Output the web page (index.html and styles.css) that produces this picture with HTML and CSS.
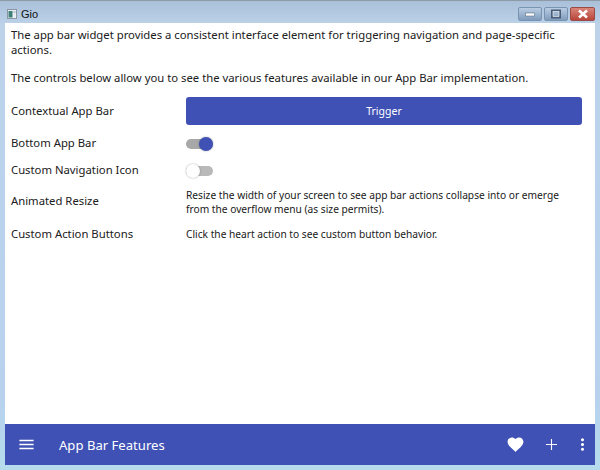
FILE: index.html
```html
<!DOCTYPE html>
<html lang="en">
<head>
    <meta charset="utf-8">
    <link rel="stylesheet" href="styles.css">
    <title>Gio</title>
</head>
<body>
<div class="window">
    <div class="titlebar">
        <svg class="app-icon" width="10" height="10" viewBox="0 0 10 10">
            <rect x="0.5" y="0.5" width="9" height="9" fill="#e8eef2" stroke="#8a97a3"/>
            <rect x="1.5" y="2" width="4" height="6.5" fill="#3f7f78"/>
            <rect x="6.5" y="2" width="2" height="2" fill="#b9c6d0"/>
        </svg>
        <span class="window-title">Gio</span>
        <div class="window-buttons">
            <div class="win-btn">
                <svg width="12" height="8" viewBox="0 0 12 8"><rect x="1.5" y="3" width="9" height="3" fill="#fff" stroke="#5f6f85" stroke-width="0.6"/></svg>
            </div>
            <div class="win-btn">
                <svg width="12" height="10" viewBox="0 0 12 10"><rect x="2" y="1.5" width="8" height="7" fill="none" stroke="#4a5c78" stroke-width="2"/><rect x="3" y="2.5" width="6" height="5" fill="none" stroke="#fff" stroke-width="0.6"/></svg>
            </div>
            <div class="win-btn win-close">
                <svg width="14" height="10" viewBox="0 0 14 10"><path d="M3 1.5 L11 8.5 M11 1.5 L3 8.5" stroke="#fff" stroke-width="2.6"/></svg>
            </div>
        </div>
    </div>
    <div class="client">
        <div class="content">
            <p class="intro">The app bar widget provides a consistent interface element for triggering navigation and page-specific actions.</p>
            <p class="intro intro-second">The controls below allow you to see the various features available in our App Bar implementation.</p>
            <div class="row row-trigger">
                <div class="row-label">Contextual App Bar</div>
                <div class="row-value"><button class="trigger-button">Trigger</button></div>
            </div>
            <div class="row row-switch">
                <div class="row-label">Bottom App Bar</div>
                <div class="row-value"><div class="switch switch-on"><div class="switch-thumb"></div></div></div>
            </div>
            <div class="row row-switch">
                <div class="row-label">Custom Navigation Icon</div>
                <div class="row-value"><div class="switch"><div class="switch-thumb"></div></div></div>
            </div>
            <div class="row row-resize">
                <div class="row-label">Animated Resize</div>
                <div class="row-value small-text">Resize the width of your screen to see app bar actions collapse into or emerge from the overflow menu (as size permits).</div>
            </div>
            <div class="row row-custom">
                <div class="row-label">Custom Action Buttons</div>
                <div class="row-value small-text">Click the heart action to see custom button behavior.</div>
            </div>
        </div>
        <div class="app-bar">
            <svg class="nav-icon" width="19" height="19" viewBox="0 0 24 24"><path d="M3 18h18v-2H3v2zm0-5h18v-2H3v2zm0-7v2h18V6H3z" fill="#fff"/></svg>
            <span class="app-bar-title">App Bar Features</span>
            <div class="app-bar-actions">
                <svg class="action-heart" width="19" height="19" viewBox="0 0 24 24"><path d="M12 21.35l-1.45-1.32C5.4 15.36 2 12.28 2 8.5 2 5.42 4.42 3 7.5 3c1.74 0 3.41.81 4.5 2.09C13.09 3.81 14.76 3 16.5 3 19.58 3 22 5.42 22 8.5c0 3.78-3.4 6.86-8.55 11.54L12 21.35z" fill="#fff"/></svg>
                <svg class="action-add" width="19" height="19" viewBox="0 0 24 24"><path d="M19 12.7h-6.3V19h-1.4v-6.3H5v-1.4h6.3V5h1.4v6.3H19v1.4z" fill="#fff"/></svg>
                <svg class="action-more" width="19" height="19" viewBox="0 0 24 24"><path d="M12 8c1.1 0 2-.9 2-2s-.9-2-2-2-2 .9-2 2 .9 2 2 2zm0 2c-1.1 0-2 .9-2 2s.9 2 2 2 2-.9 2-2-.9-2-2-2zm0 6c-1.1 0-2 .9-2 2s.9 2 2 2 2-.9 2-2-.9-2-2-2z" fill="#fff"/></svg>
            </div>
        </div>
    </div>
</div>
</body>
</html>
```

FILE: styles.css
```css
html,
body {
  margin: 0;
  height: 100%;
}

body {
  font-family: "Noto Sans", "Liberation Sans", sans-serif;
  color: #202020;
  overflow: hidden;
}

.window {
  height: 470px;
  box-sizing: border-box;
  display: flex;
  flex-direction: column;
  padding: 1px 5px 5px 5px;
  border-top: 1px solid #8d9aa8;
  background: linear-gradient(to bottom, #a9c0d8 0, #bcd3ea 25px, #b8d2ee 400px, #b5dcec 470px);
}

.titlebar {
  height: 21px;
  box-sizing: border-box;
  padding-top: 3px;
  display: flex;
  align-items: center;
  flex-shrink: 0;
}

.app-icon {
  margin-left: 2px;
}

.window-title {
  margin-left: 4px;
  font-family: "Liberation Sans", sans-serif;
  font-size: 11px;
  color: #101010;
}

.window-buttons {
  margin-left: auto;
  display: flex;
  gap: 2px;
}

.win-btn {
  width: 22px;
  height: 12px;
  display: flex;
  align-items: center;
  justify-content: center;
  background: linear-gradient(to bottom, #b9cde2, #7f9cbd);
  border: 1px solid #7a93b0;
  border-radius: 2px;
}

.win-close {
  width: 23px;
  background: linear-gradient(to bottom, #d9857a, #b9453a);
  border-color: #9b4a44;
}

.client {
  flex: 1;
  display: flex;
  flex-direction: column;
  background: #ffffff;
  min-height: 0;
}

.content {
  flex: 1;
  padding: 4px 13px 0 6px;
}

.intro {
  margin: 0;
  font-size: 11.3px;
  line-height: 15px;
}

.intro-second {
  margin-top: 13px;
}

.row {
  display: flex;
  align-items: center;
  font-size: 11.3px;
}

.row-label {
  width: 175px;
  flex-shrink: 0;
  padding-bottom: 2px;
}

.row-value {
  flex: 1;
}

.row-trigger {
  margin-top: 12px;
  margin-bottom: 5px;
}

.row-switch {
  height: 27px;
}

.row-resize {
  margin-top: 1px;
  height: 32px;
}

.row-resize .small-text {
  padding-top: 2px;
}

.row-custom {
  margin-top: 3px;
  height: 28px;
}

.small-text {
  font-size: 10.2px;
  line-height: 14px;
}

.trigger-button {
  display: block;
  width: 100%;
  height: 28px;
  padding: 0;
  border: none;
  border-radius: 3px;
  background-color: #3f51b5;
  color: #ffffff;
  font-family: inherit;
  font-size: 10.5px;
}

.switch {
  position: relative;
  width: 27px;
  height: 10px;
  border-radius: 5px;
  background-color: #b9b9b9;
}

.switch-on {
  background-color: #a8a8a8;
}

.switch-thumb {
  position: absolute;
  left: 0;
  top: -2px;
  width: 14px;
  height: 14px;
  border-radius: 50%;
  background-color: #ffffff;
  box-shadow: 0 0 2px rgba(0, 0, 0, 0.35);
}

.switch-on .switch-thumb {
  left: 13px;
  background-color: #3f51b5;
}

.app-bar {
  height: 41px;
  flex-shrink: 0;
  display: flex;
  align-items: center;
  background-color: #3f51b5;
  color: #ffffff;
}

.nav-icon {
  margin-left: 12px;
}

.app-bar-title {
  margin-left: 23px;
  font-size: 13.1px;
}

.app-bar-actions {
  margin-left: auto;
  margin-right: 3px;
  display: flex;
  gap: 17px;
}

.action-more {
  margin-left: -5px;
}
```
